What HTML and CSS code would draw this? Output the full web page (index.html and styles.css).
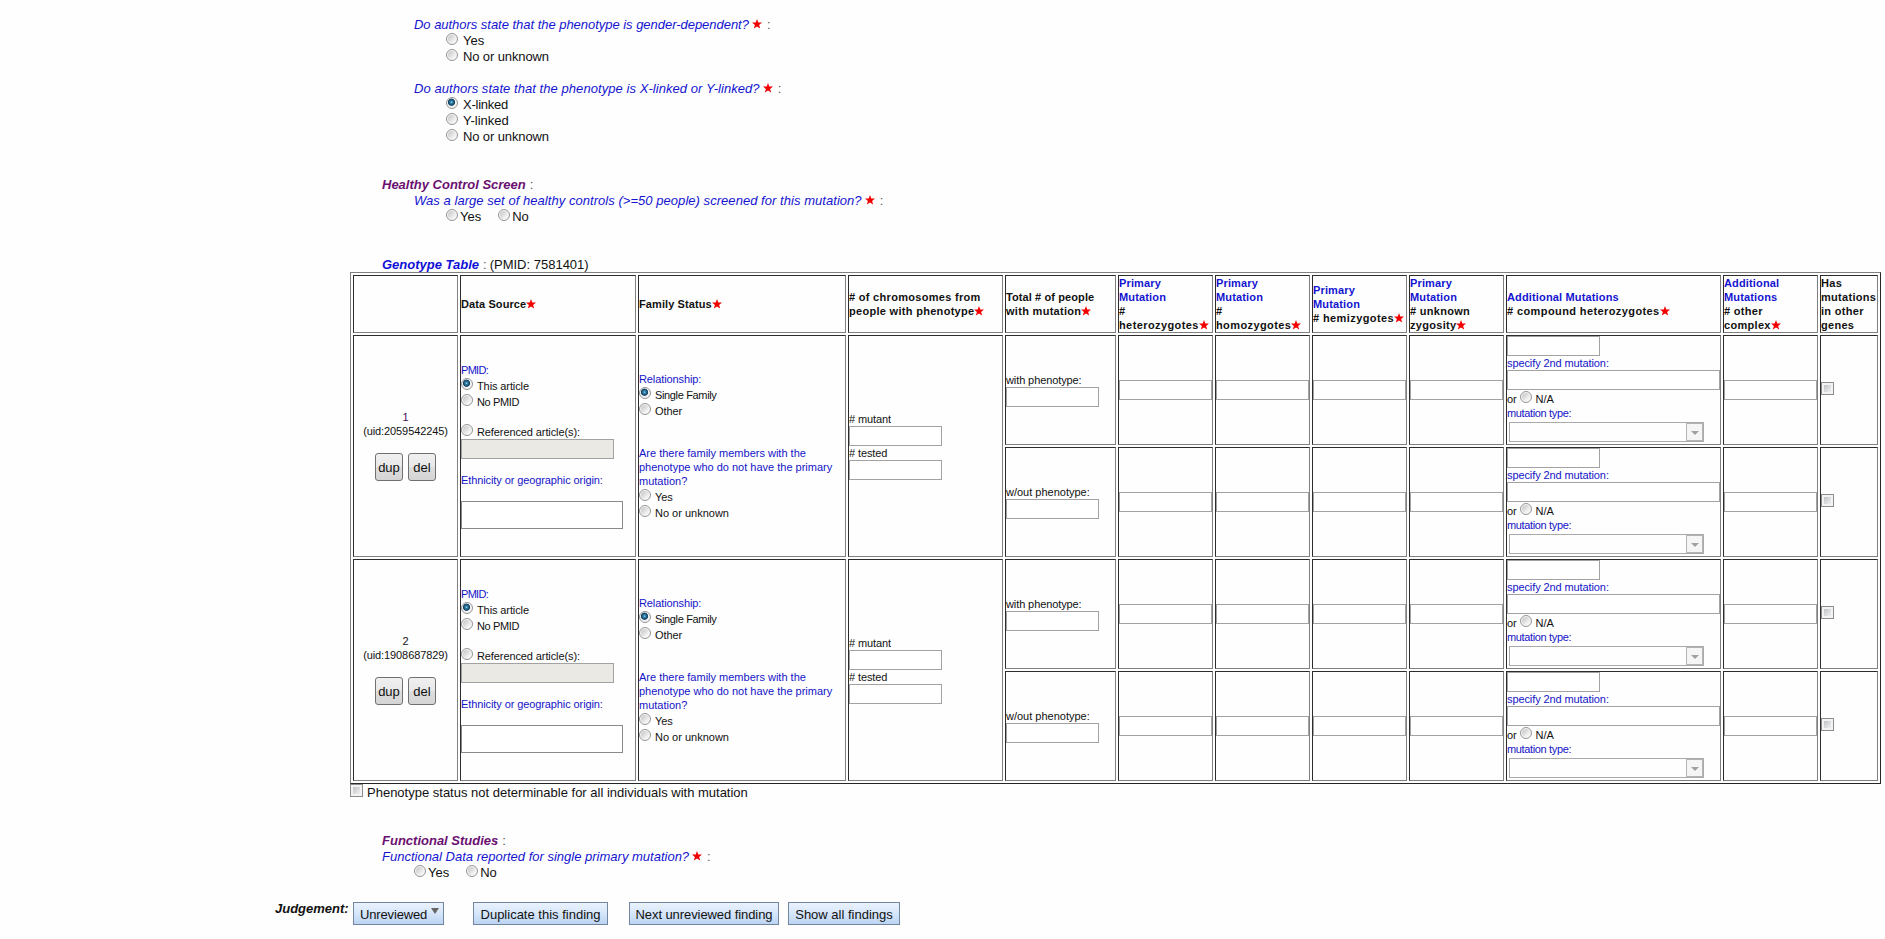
FILE: index.html
```html
<!DOCTYPE html>
<html lang="en">
<head>
<meta charset="utf-8">
<title>Finding review</title>
<link rel="stylesheet" href="styles.css">
</head>
<body>
<svg class="defs" width="0" height="0"><symbol id="star" viewBox="0 0 10 10"><path d="M5 0 L6.3 3.5 L10 3.6 L7.1 5.9 L8.2 9.6 L5 7.4 L1.8 9.6 L2.9 5.9 L0 3.6 L3.7 3.5 Z" fill="#f20000"/></symbol></svg>

<section class="questions">
  <div class="line q"><em class="q1">Do authors state that the phenotype is gender-dependent?</em><svg class="star"><use href="#star"/></svg><span class="colon">:</span></div>
  <label class="line opt"><input type="radio" name="g"><span>Yes</span></label>
  <label class="line opt"><input type="radio" name="g"><span class="nu">No or unknown</span></label>
  <div class="line q after1"><em class="q2">Do authors state that the phenotype is X-linked or Y-linked?</em><svg class="star"><use href="#star"/></svg><span class="colon">:</span></div>
  <label class="line opt"><input type="radio" name="x" checked><span class="xl">X-linked</span></label>
  <label class="line opt"><input type="radio" name="x"><span>Y-linked</span></label>
  <label class="line opt"><input type="radio" name="x"><span class="nu">No or unknown</span></label>
  <div class="line head after2"><b class="t-healthy">Healthy Control Screen</b><span class="colon">:</span></div>
  <div class="line q"><em class="q3">Was a large set of healthy controls (&gt;=50 people) screened for this mutation?</em><svg class="star"><use href="#star"/></svg><span class="colon">:</span></div>
  <div class="line opt pair"><label><input type="radio" name="h">Yes</label><label><input type="radio" name="h">No</label></div>
  <div class="line head after2"><b class="geno">Genotype Table</b><span class="colon">:</span><span class="pm">(PMID: 7581401)</span></div>
</section>

<table class="genotype">
  <colgroup><col class="c1"><col class="c2"><col class="c3"><col class="c4"><col class="c5"><col class="cn"><col class="cn"><col class="cn"><col class="cn"><col class="c10"><col class="cn"><col class="c12"></colgroup>
  <tr class="hd">
    <th></th>
    <th class="n">Data Source<svg class="star"><use href="#star"/></svg></th>
    <th class="n">Family Status<svg class="star"><use href="#star"/></svg></th>
    <th># of chromosomes from<br>people with phenotype<svg class="star"><use href="#star"/></svg></th>
    <th><span class="n">Total # of people</span><br>with mutation<svg class="star"><use href="#star"/></svg></th>
    <th><i>Primary<br>Mutation</i><br>#<br><span class="w">heterozygotes</span><svg class="star"><use href="#star"/></svg></th>
    <th><i>Primary<br>Mutation</i><br>#<br><span class="w">homozygotes</span><svg class="star"><use href="#star"/></svg></th>
    <th><i>Primary<br>Mutation</i><br><span class="w"># hemizygotes</span><svg class="star"><use href="#star"/></svg></th>
    <th><i>Primary<br>Mutation</i><br># unknown<br>zygosity<svg class="star"><use href="#star"/></svg></th>
    <th><i>Additional Mutations</i><br><span class="w"># compound heterozygotes</span><svg class="star"><use href="#star"/></svg></th>
    <th><i>Additional<br>Mutations</i><br># other<br>complex<svg class="star"><use href="#star"/></svg></th>
    <th>Has<br>mutations<br>in other<br>genes</th>
  </tr>
  <tr>
    <td rowspan="2"><div class="id"><div class="uid"><span class="one">1</span><br>(uid:2059542245)</div><div class="btns"><button>dup</button><button>del</button></div></div></td>
    <td rowspan="2"><div class="stack"><div class="blue narrow2">PMID:</div><label class="r"><input type="radio" name="a1" checked>This article</label><label class="r narrow"><input type="radio" name="a1">No PMID</label><label class="r gap"><input type="radio" name="a1">Referenced article(s):</label><input class="box ref" disabled><div class="blue gap">Ethnicity or geographic origin:</div><input class="box eth gap"></div></td>
    <td rowspan="2"><div class="stack"><div class="blue">Relationship:</div><label class="r narrow"><input type="radio" name="b1" checked>Single Family</label><label class="r"><input type="radio" name="b1">Other</label><div class="blue wide gap2">Are there family members with the<br>phenotype who do not have the primary<br>mutation?</div><label class="r"><input type="radio" name="c1">Yes</label><label class="r wide"><input type="radio" name="c1">No or unknown</label></div></td>
    <td rowspan="2"><div class="stack"><div># mutant</div><input class="box"><div># tested</div><input class="box"></div></td>
    <td><div class="stack"><div>with phenotype:</div><input class="box"></div></td>
    <td><input class="box"></td><td><input class="box"></td><td><input class="box"></td><td><input class="box"></td>
    <td><div class="stack"><input class="box"><div class="blue">specify 2nd mutation:</div><input class="box full"><label class="r na"><span>or</span><input type="radio">N/A</label><div class="blue narrow">mutation type:</div><div class="combo"><span class="arrow"></span></div></div></td>
    <td><input class="box"></td><td><input type="checkbox"></td>
  </tr>
  <tr>
    <td><div class="stack wide"><div>w/out phenotype:</div><input class="box"></div></td>
    <td><input class="box"></td><td><input class="box"></td><td><input class="box"></td><td><input class="box"></td>
    <td><div class="stack"><input class="box"><div class="blue">specify 2nd mutation:</div><input class="box full"><label class="r na"><span>or</span><input type="radio">N/A</label><div class="blue narrow">mutation type:</div><div class="combo"><span class="arrow"></span></div></div></td>
    <td><input class="box"></td><td><input type="checkbox"></td>
  </tr>
  <tr>
    <td rowspan="2"><div class="id"><div class="uid"><span>2</span><br>(uid:1908687829)</div><div class="btns"><button>dup</button><button>del</button></div></div></td>
    <td rowspan="2"><div class="stack"><div class="blue narrow2">PMID:</div><label class="r"><input type="radio" name="a2" checked>This article</label><label class="r narrow"><input type="radio" name="a2">No PMID</label><label class="r gap"><input type="radio" name="a2">Referenced article(s):</label><input class="box ref" disabled><div class="blue gap">Ethnicity or geographic origin:</div><input class="box eth gap"></div></td>
    <td rowspan="2"><div class="stack"><div class="blue">Relationship:</div><label class="r narrow"><input type="radio" name="b2" checked>Single Family</label><label class="r"><input type="radio" name="b2">Other</label><div class="blue wide gap2">Are there family members with the<br>phenotype who do not have the primary<br>mutation?</div><label class="r"><input type="radio" name="c2">Yes</label><label class="r wide"><input type="radio" name="c2">No or unknown</label></div></td>
    <td rowspan="2"><div class="stack"><div># mutant</div><input class="box"><div># tested</div><input class="box"></div></td>
    <td><div class="stack"><div>with phenotype:</div><input class="box"></div></td>
    <td><input class="box"></td><td><input class="box"></td><td><input class="box"></td><td><input class="box"></td>
    <td><div class="stack"><input class="box"><div class="blue">specify 2nd mutation:</div><input class="box full"><label class="r na"><span>or</span><input type="radio">N/A</label><div class="blue narrow">mutation type:</div><div class="combo"><span class="arrow"></span></div></div></td>
    <td><input class="box"></td><td><input type="checkbox"></td>
  </tr>
  <tr>
    <td><div class="stack wide"><div>w/out phenotype:</div><input class="box"></div></td>
    <td><input class="box"></td><td><input class="box"></td><td><input class="box"></td><td><input class="box"></td>
    <td><div class="stack"><input class="box"><div class="blue">specify 2nd mutation:</div><input class="box full"><label class="r na"><span>or</span><input type="radio">N/A</label><div class="blue narrow">mutation type:</div><div class="combo"><span class="arrow"></span></div></div></td>
    <td><input class="box"></td><td><input type="checkbox"></td>
  </tr>
</table>

<section class="footer">
  <label class="line undet"><input type="checkbox"><span>Phenotype status not determinable for all individuals with mutation</span></label>
  <div class="line head after2"><b class="t-func">Functional Studies</b><span class="colon">:</span></div>
  <div class="line head"><em>Functional Data reported for single primary mutation?</em><svg class="star"><use href="#star"/></svg><span class="colon">:</span></div>
  <div class="line opt pair inner"><label><input type="radio" name="f">Yes</label><label><input type="radio" name="f">No</label></div>
  <div class="judge">
    <b>Judgement:</b>
    <button class="sel">Unreviewed<span class="tri"></span></button>
    <button class="dupf">Duplicate this finding</button>
    <button class="next">Next unreviewed finding</button>
    <button class="show">Show all findings</button>
  </div>
</section>
</body>
</html>
```
FILE: styles.css
```css
* { box-sizing: border-box; }
body { margin: 0; background: #fefefe; color: #111; font: 13px/18px "Liberation Sans", Arial, sans-serif; overflow: hidden; white-space: nowrap; }
.defs { display: block; height: 0; }
.questions { padding-top: 16px; }
.line { display: flex; height: 16px; align-items: baseline; }
.q { padding-left: 414px; }
.head { padding-left: 382px; }
.opt { padding-left: 446px; }
.opt.inner { padding-left: 414px; }
.after1 { margin-top: 16px; }
.after2 { margin-top: 32px; }
em, .geno { color: #1414d0; }
.head b { font-style: italic; }
.t-healthy, .t-func { color: #6b1070; }
.geno { color: #1010d8; }
.q1 { letter-spacing: -0.03px; }
.q2 { letter-spacing: 0.06px; }
.q3 { letter-spacing: 0.045px; }
.nu { letter-spacing: -0.12px; }
.xl { letter-spacing: -0.25px; }
.star { width: 10px; height: 10px; display: inline-block; }
.line .star { margin-left: 3px; }
.colon { margin-left: 5px; color: #555; }
b + .colon { margin-left: 4px; }
.pm { margin-left: 3px; }

input { margin: 0; flex: none; }
input[type=radio] { appearance: none; width: 12px; height: 12px; border: 1px solid #959595; border-radius: 50%; background: linear-gradient(135deg, #c2c2c2, #f6f6f6 80%) content-box, #f6f6f6; padding: 1px; }
input[type=radio]:checked { background: radial-gradient(circle at 45% 42%, #9fd4ea 0, #2f7fa6 16%, #123f63 40%, #f2f2f2 50%); }
input[type=checkbox] { appearance: none; display: block; width: 13px; height: 13px; border: 1px solid #8c8c8c; padding: 2px; background: linear-gradient(135deg, #bfc1c4, #f2f2f2) content-box, #f3f3f3; }
.opt input { align-self: flex-start; margin: 1px 5px 0 0; }
.pair label { display: flex; }
.pair label input { margin-right: 2px; }
.pair label + label { margin-left: 17px; }

.genotype { table-layout: fixed; width: 1531px; height: 512px; margin-left: 350px; border: 1px solid; border-color: #808080 #262626 #262626 #808080; border-spacing: 2px; font-size: 11px; line-height: 14px; }
.c1 { width: 105px; } .c2 { width: 176px; } .c3 { width: 208px; } .c4 { width: 155px; } .c5 { width: 111px; } .cn { width: 95px; } .c10 { width: 215px; } .c12 { width: 58px; }
th, td { padding: 0; height: 110px; border: 1px solid; border-color: #2c2c2c #808080 #808080 #2c2c2c; text-align: left; vertical-align: middle; }
td { letter-spacing: -0.1px; }
.hd th { height: 58px; letter-spacing: 0.3px; }
.hd th.n, .hd .n { letter-spacing: 0.1px; }
.hd .w { letter-spacing: 0.4px; }
th i { font-style: normal; color: #1414d0; letter-spacing: 0.15px; }
th .star { vertical-align: 0; margin-bottom: -1px; }
td > [type=checkbox] { margin-bottom: 3px; }
.blue { color: #1414c8; }
.wide { letter-spacing: 0; }
.narrow { letter-spacing: -0.35px; }
.narrow2 { letter-spacing: -0.7px; }
.id { display: flex; flex-direction: column; align-items: center; text-align: center; gap: 15px; padding-bottom: 1px; }
.one { color: #4a0d5e; }
.btns { display: flex; gap: 5px; }
.btns button { width: 28px; height: 28px; padding: 0; border: 1px solid #707070; border-radius: 3px; background: linear-gradient(#f0f0f0, #e8e8e8 49%, #dedede 50%, #d4d4d4); font: 13px "Liberation Sans", Arial, sans-serif; color: #111; }
.stack { display: flex; flex-direction: column; align-items: flex-start; }
.r { display: flex; height: 16px; line-height: 18px; gap: 4px; }
.r input { margin-top: 1px; }
.gap { margin-top: 14px; }
.gap2 { margin-top: 28px; }
.box { display: block; width: 93px; height: 20px; padding: 0; border: 1px solid #a2a2a2; border-radius: 0; background: #fff; }
.ref { width: 153px; background: #ebe9e4; }
.eth { width: 162px; height: 28px; border-color: #8a8a8a; }
.full { width: 213px; }
.na span { margin-right: -1px; }
.combo { width: 195px; height: 20px; margin: 2px 0 2px 2px; border: 1px solid #aaa; display: flex; justify-content: flex-end; }
.arrow { width: 17px; height: 18px; border: 1px solid #b4b4b4; background: #f5f5f5; display: flex; align-items: center; justify-content: center; }
.arrow::after { content: ""; border: 4px solid transparent; border-top-color: #a0a0a0; border-bottom: 0; margin-top: 2px; }

.undet { padding-left: 350px; }
.undet input { align-self: flex-start; margin-right: 4px; }
.judge { display: flex; padding: 22px 0 0 275px; align-items: flex-start; }
.judge b { width: 78px; font-style: italic; line-height: 16px; margin-top: -1px; }
.judge button { height: 23px; padding: 0; border: 1px solid #72879f; background: linear-gradient(#eaf2fd, #d6e6fa 50%, #bcd4f2); font: 13px/23px "Liberation Sans", Arial, sans-serif; color: #111; display: flex; justify-content: center; }
.judge .sel { width: 91px; justify-content: flex-start; padding-left: 6px; gap: 4px; letter-spacing: -0.15px; }
.tri { border: 4px solid transparent; border-top: 6px solid #666; border-bottom: 0; margin-top: 5px; }
.dupf { width: 135px; margin-left: 29px; }
.next { width: 150px; margin-left: 21px; letter-spacing: -0.08px; }
.show { width: 112px; margin-left: 9px; }
```
